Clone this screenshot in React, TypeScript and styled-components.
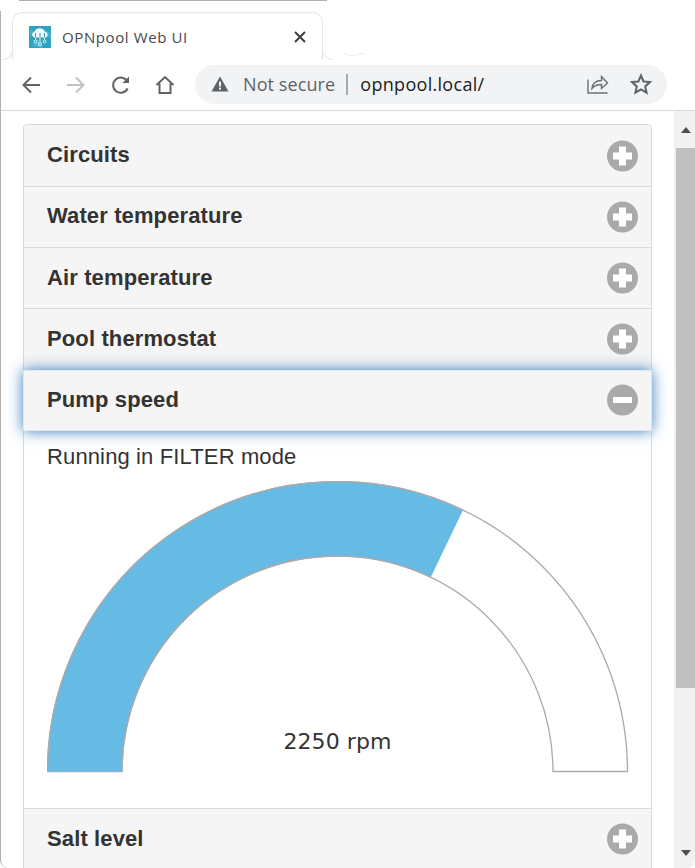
import React from "react";
import styled, { createGlobalStyle } from "styled-components";

const Global = createGlobalStyle`
  html, body { margin: 0; padding: 0; background: #fff; overflow: hidden; }
  * { box-sizing: border-box; }
`;

const Win = styled.div`
  width: 695px; height: 868px; display: flex; flex-direction: column; overflow: hidden; background: #fff;
  position: relative;
`;
const TopEdge = styled.div`
  height: 1px; margin-left: 19px; width: 308px; background: #b0b0b0; flex: none;
`;
const TabStrip = styled.div`
  height: 59px; flex: none; padding: 11px 0 0 12px; display: flex; align-items: stretch; position: relative;
  &::before { content: ""; position: absolute; left: 0; top: 10px; bottom: 0; width: 1px; background: #b0b0b0; }
`;
const Tab = styled.div`
  width: 311px; height: 48px; display: flex; align-items: center; padding: 0 15px 0 16px;
  border: 1px solid #e6e6e6; border-bottom: none; border-radius: 10px 10px 0 0; position: relative;
  &::before, &::after { content: ""; position: absolute; bottom: 0; width: 10px; height: 10px; border-bottom: 1px solid #e6e6e6; }
  &::before { left: -11px; border-right: 1px solid #e6e6e6; border-bottom-right-radius: 10px; }
  &::after { right: -11px; border-left: 1px solid #e6e6e6; border-bottom-left-radius: 10px; }
`;
const Favicon = styled.svg` width: 22px; height: 22px; flex: none; `;
const TabTitle = styled.span`
  margin-left: 11px; flex: 1; font: 15px "Open Sans", sans-serif; color: #45494f; white-space: nowrap; letter-spacing: .6px;
`;
const CloseIcon = styled.svg` width: 14px; height: 14px; flex: none; `;
const NextTabHint = styled.svg` position: absolute; left: 345px; top: 50px; width: 22px; height: 6px; `;
const Toolbar = styled.div`
  height: 51px; flex: none; display: flex; align-items: center; padding: 0 28px 0 18px; border-left: 1px solid #b0b0b0; border-bottom: 1px solid #dadada;
`;
const NavButton = styled.svg<{ $gap?: number }>` width: 24px; height: 24px; flex: none; margin-right: ${p => p.$gap ?? 20}px; `;
const Omnibox = styled.div`
  width: 472px; height: 39px; margin-left: -1px; border-radius: 20px; background: #f1f3f4; display: flex; align-items: center; padding: 0 14px 0 16px; margin-top: -2px; flex: none;
`;
const WarnIcon = styled.svg` width: 18px; height: 18px; flex: none; `;
const NotSecure = styled.span`
  margin-left: 14px; font: 18px "Open Sans", sans-serif; color: #5f6368; white-space: nowrap; letter-spacing: .1px;
`;
const Divider = styled.span` width: 2px; height: 21px; background: #a8abae; margin: 0 12px 0 11px; flex: none; `;
const Url = styled.span`
  flex: 1; font: 18px "Open Sans", sans-serif; color: #202124; white-space: nowrap; letter-spacing: .3px;
`;
const EndIcon = styled.svg<{ $gap?: number }>` width: 24px; height: 24px; flex: none; margin-left: ${p => p.$gap ?? 0}px; `;

const Viewport = styled.div`
  flex: 1; min-height: 0; display: flex; border-left: 1px solid #b0b0b0; border-bottom-left-radius: 8px; overflow: hidden;
`;
const Page = styled.div` flex: 1; min-width: 0; padding: 13px 22px 0 22px; overflow: hidden; `;
const Accordion = styled.div`
  border: 1px solid #dadada; border-radius: 4px 4px 0 0; background: #fff;
`;
const Header = styled.div<{ $open?: boolean; $first?: boolean }>`
  height: ${p => (p.$open ? 61.6 : 61.15)}px; display: flex; align-items: center; justify-content: space-between; padding: 0 13px 0 23px;
  background: #f5f5f5; border-top: ${p => (p.$first ? "none" : "1px solid #dadada")};
  font: bold 22px "Liberation Sans", Arial, sans-serif; color: #333; letter-spacing: .12px;
  position: relative;
  ${p => p.$first && "border-radius: 4px 4px 0 0;"}
  ${p => p.$open && "margin: 0 -1px; border: 1px solid #dfe6ee; box-shadow: 0 0 14px #387bbe; z-index: 1;"}
`;
const Label = styled.span<{ $raised?: boolean }>` position: relative; top: ${p => (p.$raised ? -1 : 0)}px; `;
const ToggleIcon = styled.svg` width: 32px; height: 32px; flex: none; `;
const Panel = styled.div`
  padding: 13px 23px 0 23px; height: 376.8px; font: 22px "Liberation Sans", Arial, sans-serif; color: #333; letter-spacing: .13px;
`;
const StatusLine = styled.div` line-height: 26px; `;
const GaugeSvg = styled.svg` display: block; width: 582px; height: 300px; margin-top: 11px; `;
const GaugeText = styled.text` font: 22px "DejaVu Sans", Verdana, sans-serif; fill: #333; letter-spacing: .1px; `;

const Scrollbar = styled.div`
  width: 21px; flex: none; background: #f1f1f1; display: flex; flex-direction: column; align-items: stretch; border-bottom-right-radius: 8px;
`;
const ArrowBox = styled.div<{ $h: number }>` height: ${p => p.$h}px; flex: none; display: flex; align-items: center; justify-content: center; padding-left: 2px; `;
const Arrow = styled.div<{ $down?: boolean }>`
  width: 0; height: 0; border-left: 5.5px solid transparent; border-right: 5.5px solid transparent;
  ${p => (p.$down ? "border-top: 6px solid #505050;" : "border-bottom: 6px solid #505050;")}
`;
const Thumb = styled.div` height: 540px; background: #c0c0c0; margin-left: 2px; flex: none; `;
const Track = styled.div` flex: 1; `;

const Toggle = ({ open }: { open?: boolean }) => (
  <ToggleIcon viewBox="0 0 32 32">
    <circle cx="16.5" cy="16" r="15.5" fill="#aaaaaa" />
    {open ? (
      <rect x="7" y="13" width="19" height="6" fill="#fff" />
    ) : (
      <path d="M13 6.500h7v6h6v7h-6v6h-7v-6h-6v-7h6z" fill="#fff" />
    )}
  </ToggleIcon>
);

const Row = ({ label, open, first, raised }: { label: string; open?: boolean; first?: boolean; raised?: boolean }) => (
  <Header $open={open} $first={first}>
    <Label $raised={raised}>{label}</Label>
    <Toggle open={open} />
  </Header>
);

export default function App() {
  const cx = 290.5, cy = 290.5, R = 290, r = 215.5;
  const ox = cx + 125.5, oy = cy - 261.4, ix = cx + 93.3, iy = cy - 194.3;
  const fill = `M${cx - R} ${cy}A${R} ${R} 0 0 1 ${ox} ${oy}L${ix} ${iy}A${r} ${r} 0 0 0 ${cx - r} ${cy}Z`;
  const track = `M${cx - R} ${cy}A${R} ${R} 0 0 1 ${cx + R} ${cy}L${cx + r} ${cy}A${r} ${r} 0 0 0 ${cx - r} ${cy}Z`;
  return (
    <Win>
      <Global />
      <TopEdge />
      <TabStrip>
        <Tab>
          <Favicon viewBox="0 0 22 22">
            <rect width="22" height="22" fill="#2ca3bd" />
            <path d="M3 20l6-7 5 9zM15 2l7 6v6zM1 3l5 3-5 5z" fill="#46b4cb" />
            <path d="M5.500 11.500a2.800 2.800 0 0 1 -.3-5.500A5.800 5.800 0 0 1 16 5.800a2.900 2.900 0 0 1 .5 5.700z" fill="#f2fbfd" />
            <path d="M6.500 7v4M11 7v4M15.500 7v4" stroke="#2ca3bd" strokeWidth="1" />
            <path d="M6.500 11.500v2.500M11 11.500v5M15.500 11.500v2.500" stroke="#e2f5f9" strokeWidth="1" />
            <circle cx="6.500" cy="15.500" r="1.500" fill="none" stroke="#e2f5f9" />
            <circle cx="11" cy="18.200" r="1.500" fill="none" stroke="#e2f5f9" />
            <circle cx="15.500" cy="15.500" r="1.500" fill="none" stroke="#e2f5f9" />
          </Favicon>
          <TabTitle>OPNpool Web UI</TabTitle>
          <CloseIcon viewBox="0 0 14 14">
            <path d="M2 2l10 10M12 2L2 12" stroke="#3c4043" strokeWidth="2" />
          </CloseIcon>
        </Tab>
        <NextTabHint viewBox="0 0 22 6">
          <path d="M0 3l7 2 13-3" fill="none" stroke="#e6e6e6" strokeDasharray="3 1" />
        </NextTabHint>
      </TabStrip>
      <Toolbar>
        <NavButton viewBox="0 0 24 24" $gap={21}>
          <path d="M21 12H4.500M12 4.500L4.500 12l7.500 7.500" fill="none" stroke="#5f6368" strokeWidth="2" />
        </NavButton>
        <NavButton viewBox="0 0 24 24" $gap={21}>
          <path d="M3 12h16.500M12 4.500l7.500 7.500-7.500 7.500" fill="none" stroke="#bdc1c6" strokeWidth="2" />
        </NavButton>
        <NavButton viewBox="0 0 24 24" $gap={20}>
          <path d="M18.600 15.500a7.600 7.600 0 1 1-.3-7.200" fill="none" stroke="#5f6368" strokeWidth="2" />
          <path d="M20 3.500v6.600h-6.600z" fill="#5f6368" />
        </NavButton>
        <NavButton viewBox="0 0 24 24" $gap={19}>
          <path d="M3.500 12L12 4l8.500 8M6.500 10.500V20h11v-9.500" fill="none" stroke="#5f6368" strokeWidth="2" />
        </NavButton>
        <Omnibox>
          <WarnIcon viewBox="0 0 18 18">
            <path d="M9 1.500L17.500 16.500H.5z" fill="#5f6368" />
            <rect x="8" y="6.500" width="2" height="5" fill="#f1f3f4" />
            <rect x="8" y="12.600" width="2" height="2" fill="#f1f3f4" />
          </WarnIcon>
          <NotSecure>Not secure</NotSecure>
          <Divider />
          <Url>opnpool.local/</Url>
          <EndIcon viewBox="0 0 24 24">
            <path d="M3 7.500V21h19.500M7 16.500c.5-5 4-8 9.500-8V4.500l6 6.500-6 5.500v-4c-4 0-7 1-9.500 4z" fill="none" stroke="#6b6f74" strokeWidth="1.400" />
          </EndIcon>
          <EndIcon viewBox="0 0 24 24" $gap={20}>
            <path d="M12 3.500l2.600 6 6.400.6-4.800 4.300 1.400 6.300-5.600-3.300-5.600 3.300 1.400-6.300L3 10.100l6.400-.6z" fill="none" stroke="#5f6368" strokeWidth="2" />
          </EndIcon>
        </Omnibox>
      </Toolbar>
      <Viewport>
        <Page>
          <Accordion>
            <Row label="Circuits" first raised />
            <Row label="Water temperature" raised />
            <Row label="Air temperature" />
            <Row label="Pool thermostat" />
            <Row label="Pump speed" open />
            <Panel>
              <StatusLine>Running in FILTER mode</StatusLine>
              <GaugeSvg viewBox="0 0 582 300">
                <path d={track} fill="#fff" stroke="#aaa" strokeWidth="1.300" />
                <path d={fill} fill="#66bbe4" stroke="none" />
                <path d={`M${cx - R} ${cy}A${R} ${R} 0 0 1 ${ox} ${oy}`} fill="none" stroke="#aaa" strokeWidth="1.300" />
                <path d={`M${ix} ${iy}A${r} ${r} 0 0 0 ${cx - r} ${cy}`} fill="none" stroke="#aaa" strokeWidth="1.300" />
                <GaugeText x={cx} y={268} textAnchor="middle">2250 rpm</GaugeText>
              </GaugeSvg>
            </Panel>
            <Row label="Salt level" />
          </Accordion>
        </Page>
        <Scrollbar>
          <ArrowBox $h={37}><Arrow /></ArrowBox>
          <Thumb />
          <Track />
          <ArrowBox $h={30}><Arrow $down /></ArrowBox>
        </Scrollbar>
      </Viewport>
    </Win>
  );
}
